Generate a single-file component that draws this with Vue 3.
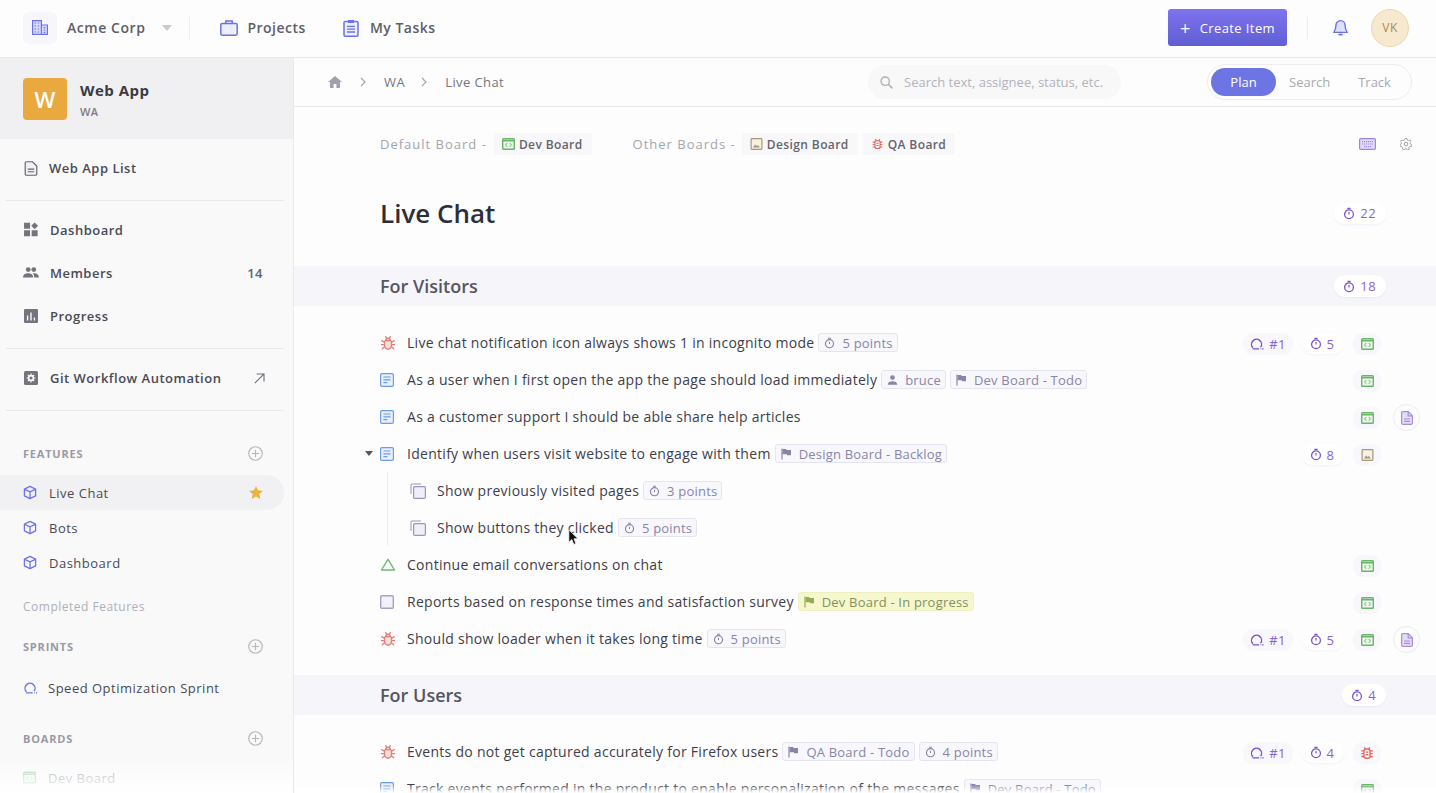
<template>
  <div class="app">
    <!-- icon sprite -->
    <svg class="sprite" width="0" height="0">
      <symbol id="i-bug" viewBox="0 0 16 16">
        <path d="M5.5 5.5h5a2.4 2.4 0 0 1 1 2v3a3.5 3.5 0 0 1-7 0v-3a2.4 2.4 0 0 1 1-2z" fill="#f5dedb" stroke="currentColor" stroke-width="1.3" />
        <path d="M5.8 5.3a2.2 2.2 0 0 1 4.4 0M5.6 1.6l1.2 1.6M10.4 1.6L9.2 3.2M4.4 7.2L1.8 5.6M11.6 7.2l2.6-1.6M4.4 9.6H1.4M11.6 9.6h3M4.7 11.8l-2.5 2M11.3 11.8l2.5 2" fill="none" stroke="currentColor" stroke-width="1.3" stroke-linecap="round" />
      </symbol>
      <symbol id="i-bug-solid" viewBox="0 0 16 16">
        <rect x="4.5" y="3.5" width="7" height="10.5" rx="2.6" fill="none" stroke="currentColor" stroke-width="1.6" />
        <path d="M6.5 7h3M6.5 10h3M1.5 5.5h3M11.5 5.5h3M1.5 8.7h3M11.5 8.7h3M1.5 12h3M11.5 12h3M6 3.5 5 1.5M10 3.5l1-2" fill="none" stroke="currentColor" stroke-width="1.5" />
      </symbol>
      <symbol id="i-story" viewBox="0 0 14 14">
        <rect x=".6" y=".6" width="12.8" height="12.8" rx="1.4" fill="#e9effb" stroke="currentColor" stroke-width="1.2" />
        <path d="M3.4 4h7.2M3.4 6.8h7.2M3.4 9.6h4" fill="none" stroke="currentColor" stroke-width="1.2" />
      </symbol>
      <symbol id="i-sub" viewBox="0 0 16 16">
        <path d="M1 11V1.8a.8.8 0 0 1 .8-.8H11" fill="none" stroke="currentColor" stroke-width="1" />
        <rect x="3.6" y="3.6" width="11.8" height="11.8" rx="1.2" fill="#f0eff7" stroke="currentColor" stroke-width="1.2" />
      </symbol>
      <symbol id="i-tri" viewBox="0 0 15 13">
        <path d="M7.5 1.3 14 12H1z" fill="none" stroke="currentColor" stroke-width="1.4" stroke-linejoin="round" />
      </symbol>
      <symbol id="i-square" viewBox="0 0 14 14">
        <rect x=".7" y=".7" width="12.6" height="12.6" rx="1.2" fill="#f2f1f8" stroke="currentColor" stroke-width="1.4" />
      </symbol>
      <symbol id="i-dev" viewBox="0 0 13 12">
        <rect x=".7" y=".7" width="11.6" height="10.6" rx=".8" fill="#eef7ec" stroke="currentColor" stroke-width="1.4" />
        <path d="M.7 2.7h11.6" stroke="currentColor" stroke-width="1.6" />
        <path d="M5.2 5 3.6 6.9l1.6 1.9M7.8 5l1.6 1.9-1.6 1.9" fill="none" stroke="currentColor" stroke-width="1" />
      </symbol>
      <symbol id="i-design" viewBox="0 0 12 12">
        <rect x=".6" y=".6" width="10.8" height="10.8" rx=".8" fill="#f7f1e4" stroke="currentColor" stroke-width="1.2" />
        <path d="M2.4 9.4 4.6 6.6l1.4 1.5 1.3-1.1 2.2 2.4z" fill="currentColor" />
      </symbol>
      <symbol id="i-timer" viewBox="0 0 12 12">
        <circle cx="6" cy="6.8" r="4.4" fill="none" stroke="currentColor" stroke-width="1.3" />
        <path d="M4.4.8h3.2M6 4.6v2.4" fill="none" stroke="currentColor" stroke-width="1.2" />
      </symbol>
      <symbol id="i-sprint" viewBox="0 0 14 14">
        <path d="M10.6 10.2A5 5 0 1 0 3 10.8" fill="none" stroke="currentColor" stroke-width="1.4" />
        <path d="M2.6 11.8h6.6M10.6 11.8h.8M12.4 11.8h1.2" fill="none" stroke="currentColor" stroke-width="1.3" />
      </symbol>
      <symbol id="i-flag" viewBox="0 0 11 12">
        <path d="M1 .5v11" stroke="currentColor" stroke-width="1.2" />
        <path d="M1.6 1h3.6l.4 1h4.4v5.2H6.2l-.4-1H1.6z" fill="currentColor" />
      </symbol>
      <symbol id="i-user" viewBox="0 0 12 12">
        <circle cx="6" cy="3.4" r="2.6" fill="currentColor" />
        <path d="M.8 11.2c0-2.6 2.4-3.8 5.2-3.8s5.2 1.2 5.2 3.8z" fill="currentColor" />
      </symbol>
      <symbol id="i-doc" viewBox="0 0 12 14">
        <path d="M1.6.7h5.8l4 4v7.4a1.2 1.2 0 0 1-1.2 1.2H1.8A1.2 1.2 0 0 1 .6 12.1V1.7a1 1 0 0 1 1-1z" fill="#e4dbf6" stroke="currentColor" stroke-width="1.2" />
        <path d="M7.2.8v4h4M3 8h6M3 10.4h6" fill="none" stroke="currentColor" stroke-width="1.2" />
      </symbol>
      <symbol id="i-cube" viewBox="0 0 14 14">
        <path d="M7 .8 12.6 3.6v6.8L7 13.2 1.4 10.4V3.6z" fill="none" stroke="currentColor" stroke-width="1.3" stroke-linejoin="round" />
        <path d="M1.6 3.8 7 6.4l5.4-2.6M7 6.4v6.6" fill="none" stroke="currentColor" stroke-width="1.3" />
      </symbol>
      <symbol id="i-plus" viewBox="0 0 14 14">
        <circle cx="7" cy="7" r="6.3" fill="none" stroke="currentColor" stroke-width="1.1" />
        <path d="M7 3.6v6.8M3.6 7h6.8" stroke="currentColor" stroke-width="1.1" />
      </symbol>
    </svg>

    <header class="topbar">
      <div class="org-icon">
        <svg width="16" height="15" viewBox="0 0 16 15">
          <path d="M.6.6h8.8v13.8H.6zM9.4 5h6v9.4h-6z" fill="#d9dcfb" stroke="#6a72ea" stroke-width="1.2" />
          <path d="M2.5 3h1.6M5.6 3h1.6M2.5 6h1.6M5.6 6h1.6M2.5 9h1.6M5.6 9h1.6M2.5 12h1.6M5.6 12h1.6M11.5 7.6h1.8M11.5 10h1.8M11.5 12.4h1.8" stroke="#6a72ea" stroke-width="1.2" />
        </svg>
      </div>
      <span class="org-name">Acme Corp</span>
      <span class="org-caret"></span>
      <span class="vsep"></span>
      <a class="top-link projects">
        <svg width="18" height="16" viewBox="0 0 18 16">
          <rect x=".8" y="3.6" width="16.4" height="11.6" rx="1.4" fill="#eeeffd" stroke="#6a72ea" stroke-width="1.5" />
          <path d="M5.8 3.6V1h6.4v2.6" fill="none" stroke="#6a72ea" stroke-width="1.5" />
        </svg>
        Projects
      </a>
      <a class="top-link tasks">
        <svg width="16" height="18" viewBox="0 0 16 18">
          <rect x="1" y="2.4" width="14" height="14.8" rx="1.2" fill="#eeeffd" stroke="#6a72ea" stroke-width="1.5" />
          <path d="M5 1h6v3H5z" fill="#6a72ea" />
          <path d="M4 7.4h8M4 10.2h8M4 13h8" stroke="#6a72ea" stroke-width="1.3" />
        </svg>
        My Tasks
      </a>
      <div class="top-right">
        <button class="create-btn"><span class="create-plus">+</span>Create Item</button>
        <span class="vsep"></span>
        <svg class="bell" width="15" height="18" viewBox="0 0 15 18">
          <path d="M7.5 1.6a4.6 4.6 0 0 1 4.6 4.6c0 4 .8 5.4 2.1 7.2H.8c1.3-1.8 2.1-3.2 2.1-7.2a4.6 4.6 0 0 1 4.6-4.6z" fill="#dfe1fc" stroke="#6a72ea" stroke-width="1.4" stroke-linejoin="round" />
          <path d="M5.5 15.6h4" stroke="#6a72ea" stroke-width="1.8" />
        </svg>
        <div class="avatar">VK</div>
      </div>
    </header>

    <div class="body">
      <aside class="sidebar">
        <div class="proj-head">
          <div class="proj-logo">W</div>
          <div class="proj-info">
            <div class="proj-name">Web App</div>
            <div class="proj-key">WA</div>
          </div>
        </div>

        <div class="side-group list-group">
          <div class="side-link list-link">
            <svg width="13" height="15" viewBox="0 0 12 14" class="side-ic">
              <path d="M1.6.7h5.8l4 4v7.4a1.2 1.2 0 0 1-1.2 1.2H1.8A1.2 1.2 0 0 1 .6 12.1V1.7a1 1 0 0 1 1-1z" fill="#f1f1f3" stroke="#64646f" stroke-width="1.1" />
              <path d="M3 7.6h6M3 10h6" stroke="#64646f" stroke-width="1.1" />
            </svg>
            Web App List
          </div>
        </div>

        <div class="side-group nav-group">
          <div class="side-link">
            <svg width="15" height="15" viewBox="0 0 14 14" class="side-ic">
              <path d="M.5.8h5.6v5.6H.5zM.5 7.6h5.6v5.6H.5zM7.6 7.6h5.6v5.6H7.6zM10.4.4l3.2 3.2-3.2 3.2-3.2-3.2z" fill="#74747f" />
            </svg>
            Dashboard
          </div>
          <div class="side-link">
            <svg width="16" height="11" viewBox="0 0 16 11" class="side-ic">
              <circle cx="5.2" cy="2.6" r="2.4" fill="#74747f" /><circle cx="10.8" cy="2.6" r="2.4" fill="#74747f" />
              <path d="M0 10.6c0-3 2.2-4.4 5.2-4.4s5 1.4 5 4.4zM11.2 10.6c0-1.8-.4-3-1.4-4.2 3.2-.4 6.2 1 6.2 4.2z" fill="#74747f" />
            </svg>
            Members
            <span class="side-count">14</span>
          </div>
          <div class="side-link">
            <svg width="15" height="14" viewBox="0 0 14 14" class="side-ic">
              <rect width="14" height="14" rx="1.2" fill="#74747f" />
              <path d="M3.6 6.5v5M7 3.4v8M10.4 8.4v3" stroke="#f9f9fa" stroke-width="1.4" />
            </svg>
            Progress
          </div>
        </div>

        <div class="side-group git-group">
          <div class="side-link">
            <svg width="14" height="14" viewBox="0 0 14 14" class="side-ic">
              <rect width="14" height="14" rx="1.6" fill="#74747f" />
              <circle cx="7" cy="7" r="2.4" fill="none" stroke="#f9f9fa" stroke-width="1.6" />
              <path d="M7 2.6v1.6M7 9.8v1.6M2.6 7h1.6M9.8 7h1.6M3.9 3.9 5 5M9 9l1.1 1.1M3.9 10.1 5 9M9 5l1.1-1.1" stroke="#f9f9fa" stroke-width="1.2" />
            </svg>
            Git Workflow Automation
            <svg class="side-arrow" width="11" height="11" viewBox="0 0 11 11">
              <path d="M.8 10.2 9.8 1.2M2.6 1h7.4v7.4" fill="none" stroke="#6d6d78" stroke-width="1.1" />
            </svg>
          </div>
        </div>

        <div class="side-title features-title">
          FEATURES
          <svg class="add-ic"><use href="#i-plus" /></svg>
        </div>
        <div class="feature active">
          <svg class="cube"><use href="#i-cube" /></svg>Live Chat
          <svg class="star" width="14" height="13" viewBox="0 0 14 13">
            <path d="M7 0l2 4.3 5 .6-3.7 3.2 1 4.9L7 10.6 2.7 13l1-4.9L0 4.9l5-.6z" fill="#ebb33f" />
          </svg>
        </div>
        <div class="feature"><svg class="cube"><use href="#i-cube" /></svg>Bots</div>
        <div class="feature"><svg class="cube"><use href="#i-cube" /></svg>Dashboard</div>
        <div class="completed">Completed Features</div>

        <div class="side-title">
          SPRINTS
          <svg class="add-ic"><use href="#i-plus" /></svg>
        </div>
        <div class="sprint-link"><svg class="sprint-ic"><use href="#i-sprint" /></svg>Speed Optimization Sprint</div>

        <div class="side-title boards-title">
          BOARDS
          <svg class="add-ic"><use href="#i-plus" /></svg>
        </div>
        <div class="feature faded"><svg class="cube green"><use href="#i-dev" /></svg>Dev Board</div>
        <div class="side-fade"></div>
      </aside>

      <main class="main">
        <div class="crumbs">
          <svg width="14" height="12" viewBox="0 0 14 12" class="home">
            <path d="M7 0 0 6h2v6h3.6V8h2.8v4H12V6h2z" fill="#a2a2ac" />
          </svg>
          <svg class="chev" width="6" height="10" viewBox="0 0 6 10"><path d="M1 .8 5 5 1 9.2" fill="none" stroke="#a2a2ac" stroke-width="1.2" /></svg>
          <span class="crumb crumb-key">WA</span>
          <svg class="chev second" width="6" height="10" viewBox="0 0 6 10"><path d="M1 .8 5 5 1 9.2" fill="none" stroke="#a2a2ac" stroke-width="1.2" /></svg>
          <span class="crumb">Live Chat</span>
          <div class="search">
            <svg width="13" height="13" viewBox="0 0 13 13">
              <circle cx="5.2" cy="5.2" r="4.2" fill="none" stroke="#aeaeb6" stroke-width="1.3" />
              <path d="M8.4 8.4l4 4" stroke="#aeaeb6" stroke-width="1.5" />
            </svg>
            Search text, assignee, status, etc.
          </div>
          <div class="tabs">
            <span class="tab on">Plan</span>
            <span class="tab search-tab">Search</span>
            <span class="tab">Track</span>
          </div>
        </div>

        <div class="boards-row">
          <span class="boards-label">Default Board -</span>
          <span class="board-chip"><svg class="bc-ic dev"><use href="#i-dev" /></svg>Dev Board</span>
          <span class="boards-label other">Other Boards -</span>
          <span class="board-chip"><svg class="bc-ic design"><use href="#i-design" /></svg>Design Board</span>
          <span class="board-chip"><svg class="bc-ic qa"><use href="#i-bug-solid" /></svg>QA Board</span>
          <svg class="kbd" width="17" height="12" viewBox="0 0 17 12">
            <rect x=".6" y=".6" width="15.8" height="10.8" rx="1.2" fill="#e3dcf7" stroke="#9c86df" stroke-width="1.2" />
            <path d="M3 3.6h11M3 6h11M5 8.6h7" stroke="#9c86df" stroke-width="1.2" stroke-dasharray="1.2 .8" />
          </svg>
          <svg class="gear" width="12" height="12" viewBox="0 0 12 12">
            <circle cx="6" cy="6" r="1.8" fill="none" stroke="#9b9ba4" />
            <path d="M5 .6h2l.3 1.5 1.3.6 1.3-.8 1.2 1.5-1 1.2.3 1.4 1.3.7-.4 1.9-1.5 0-.9 1.1.3 1.5-1.8.8-.9-1.2H5.1l-.9 1.2-1.8-.8.3-1.5-.9-1.1-1.5 0-.4-1.9 1.3-.7.3-1.4-1-1.2 1.2-1.5 1.3.8 1.3-.6z" fill="none" stroke="#9b9ba4" stroke-width=".9" stroke-linejoin="round" />
          </svg>
        </div>

        <div class="title-row">
          <h1>Live Chat</h1>
          <span class="est-pill title-est"><svg class="timer"><use href="#i-timer" /></svg>22</span>
        </div>

        <section v-for="sec in sections" :key="sec.name">
          <div class="sec-head">
            <h2>{{ sec.name }}</h2>
            <span class="est-pill sec-est"><svg class="timer"><use href="#i-timer" /></svg>{{ sec.points }}</span>
          </div>
          <div class="rows">
            <div v-for="row in sec.rows" :key="row.text" class="row" :class="{ child: row.child }">
              <span v-if="row.open" class="row-caret"></span>
              <span v-if="row.child" class="tree-line"></span>
              <svg class="type-ic" :class="row.type"><use :href="'#i-' + row.type" /></svg>
              <span class="row-text">{{ row.text }}</span>
              <span v-for="tag in row.tags" :key="tag.label" class="tag" :class="{ lime: tag.lime }">
                <svg class="tag-ic"><use :href="'#i-' + tag.icon" /></svg>{{ tag.label }}
              </span>
              <div class="row-meta">
                <span class="m-sprint"><span v-if="row.sprint" class="sprint-chip"><svg class="m-sprint-ic"><use href="#i-sprint" /></svg>#1</span></span>
                <span class="m-est"><span v-if="row.points" class="est-pill"><svg class="timer"><use href="#i-timer" /></svg>{{ row.points }}</span></span>
                <span class="m-board" :class="{ filled: row.board }"><svg v-if="row.board" class="m-board-ic" :class="row.board"><use :href="'#i-' + boardIcons[row.board]" /></svg></span>
                <span class="m-doc"><span v-if="row.doc" class="doc-btn"><svg class="doc-ic"><use href="#i-doc" /></svg></span></span>
              </div>
            </div>
          </div>
        </section>
        <div class="main-fade"></div>
      </main>
    </div>

    <!-- mouse pointer caught in the recording -->
    <svg class="pointer" width="11" height="17" viewBox="0 0 11 17">
      <path d="M.8.8v12.6l3-2.8 2 4.8 2.2-.9-2-4.7h4.2z" fill="#111" stroke="#fff" stroke-width=".8" />
    </svg>
  </div>
</template>

<script setup>
const boardIcons = { dev: 'dev', design: 'design', qa: 'bug-solid' }

const sections = [
  {
    name: 'For Visitors',
    points: 18,
    rows: [
      { type: 'bug', text: 'Live chat notification icon always shows 1 in incognito mode', tags: [{ icon: 'timer', label: '5 points' }], sprint: true, points: 5, board: 'dev' },
      { type: 'story', text: 'As a user when I first open the app the page should load immediately', tags: [{ icon: 'user', label: 'bruce' }, { icon: 'flag', label: 'Dev Board - Todo' }], board: 'dev' },
      { type: 'story', text: 'As a customer support I should be able share help articles', board: 'dev', doc: true },
      { type: 'story', open: true, text: 'Identify when users visit website to engage with them', tags: [{ icon: 'flag', label: 'Design Board - Backlog' }], points: 8, board: 'design' },
      { type: 'sub', child: true, text: 'Show previously visited pages', tags: [{ icon: 'timer', label: '3 points' }] },
      { type: 'sub', child: true, text: 'Show buttons they clicked', tags: [{ icon: 'timer', label: '5 points' }] },
      { type: 'tri', text: 'Continue email conversations on chat', board: 'dev' },
      { type: 'square', text: 'Reports based on response times and satisfaction survey', tags: [{ icon: 'flag', label: 'Dev Board - In progress', lime: true }], board: 'dev' },
      { type: 'bug', text: 'Should show loader when it takes long time', tags: [{ icon: 'timer', label: '5 points' }], sprint: true, points: 5, board: 'dev', doc: true }
    ]
  },
  {
    name: 'For Users',
    points: 4,
    rows: [
      { type: 'bug', text: 'Events do not get captured accurately for Firefox users', tags: [{ icon: 'flag', label: 'QA Board - Todo' }, { icon: 'timer', label: '4 points' }], sprint: true, points: 4, board: 'qa' },
      { type: 'story', text: 'Track events performed in the product to enable personalization of the messages', tags: [{ icon: 'flag', label: 'Dev Board - Todo' }], board: 'dev' }
    ]
  }
]
</script>

<style>
html, body {
  margin: 0;
  background: #fdfdfe;
}
</style>

<style scoped>
.app {
  position: relative;
  height: 793px;
  overflow: hidden;
  background: #fdfdfe;
  color: #3a3a45;
  font-family: "Open Sans", "Liberation Sans", sans-serif;
  font-size: 14px;
}

.sprite {
  position: absolute;
}

/* top bar */
.topbar {
  display: flex;
  align-items: center;
  height: 55px;
  padding: 0 27px 2px 23px;
  border-bottom: 1px solid #e9e9ec;
  background: #fdfdfe;
}

.org-icon {
  display: flex;
  align-items: center;
  justify-content: center;
  width: 34px;
  height: 32px;
  border-radius: 6px;
  background: #f6f6fb;
}

.org-name {
  margin-left: 10px;
  font-size: 14px;
  font-weight: 600;
  letter-spacing: 0.55px;
  color: #5d5d69;
}

.org-caret {
  width: 0;
  height: 0;
  margin-left: 17px;
  border: 5px solid transparent;
  border-top: 6px solid #c9c9cf;
  border-bottom: 0;
}

.vsep {
  width: 1px;
  height: 22px;
  margin-left: 17px;
  background: #ededf0;
}

.top-link {
  display: flex;
  align-items: center;
  gap: 9px;
  margin-left: 30px;
  font-weight: 600;
  letter-spacing: 0.5px;
  color: #5d5d69;
}

.top-link.tasks {
  gap: 11px;
  margin-left: 37px;
}

.top-right {
  display: flex;
  align-items: center;
  margin-left: auto;
}

.create-btn {
  display: flex;
  align-items: center;
  width: 119px;
  height: 37px;
  padding: 0 0 0 12px;
  border: 0;
  border-radius: 3px;
  background: linear-gradient(#7f72ee, #5f5fd2);
  color: #fff;
  font-family: inherit;
  font-size: 13px;
  letter-spacing: 0.4px;
}

.create-plus {
  margin-right: 9px;
  font-size: 18px;
  line-height: 18px;
}

.top-right .vsep {
  margin-left: 20px;
}

.bell {
  margin-left: 25px;
}

.avatar {
  display: flex;
  align-items: center;
  justify-content: center;
  box-sizing: border-box;
  width: 38px;
  height: 38px;
  margin-left: 23px;
  border: 1px solid #ecd9a8;
  border-radius: 50%;
  background: #f6e9cf;
  color: #a98b4f;
  font-size: 12px;
  letter-spacing: 0.5px;
}

.body {
  display: flex;
  height: 735px;
}

/* sidebar */
.sidebar {
  position: relative;
  flex: 0 0 293px;
  height: 735px;
  overflow: hidden;
  border-right: 1px solid #e9e9ec;
  background: #f9f9fa;
}

.proj-head {
  display: flex;
  align-items: center;
  gap: 13px;
  height: 81px;
  padding-left: 23px;
  background: #f0f0f2;
}

.proj-logo {
  display: flex;
  align-items: center;
  justify-content: center;
  width: 44px;
  height: 42px;
  border-radius: 4px;
  background: #eaa93f;
  color: #fff;
  font-size: 22px;
  font-weight: 600;
}

.proj-info {
  margin-top: 2px;
}

.proj-name {
  font-size: 15px;
  font-weight: 700;
  letter-spacing: 0.5px;
  color: #3a3a45;
}

.proj-key {
  margin-top: 4px;
  font-size: 11px;
  font-weight: 600;
  letter-spacing: 0.3px;
  color: #7b7b86;
}

.side-group {
  margin-right: 9px;
  margin-left: 6px;
  border-bottom: 1px solid #e9e9ec;
}

.list-group {
  height: 61px;
}

.nav-group {
  height: 140px;
}

.git-group {
  height: 61px;
}

.side-link {
  position: relative;
  display: flex;
  align-items: center;
  height: 43px;
  padding-left: 17px;
  font-size: 13px;
  font-weight: 600;
  letter-spacing: 0.5px;
  color: #4a4a55;
}

.list-link {
  height: 58px;
}

.nav-group .side-link:first-child {
  margin-top: 7px;
}

.git-group .side-link {
  height: 58px;
}

.side-ic {
  flex: 0 0 auto;
  width: 16px;
  margin-right: 11px;
}

.list-link .side-ic {
  margin-right: 10px;
}

.side-count {
  position: absolute;
  right: 21px;
  color: #64646f;
}

.side-arrow {
  position: absolute;
  right: 19px;
}

.side-title {
  display: flex;
  align-items: center;
  justify-content: space-between;
  height: 20px;
  margin: 21px 30px 0 23px;
  font-size: 11px;
  font-weight: 700;
  letter-spacing: 0.8px;
  color: #9a9aa3;
}

.features-title {
  margin-top: 32px;
}

.boards-title {
  margin-top: 30px;
}

.add-ic {
  width: 15px;
  height: 15px;
  color: #b6b6bd;
}

.feature {
  position: relative;
  display: flex;
  align-items: center;
  height: 35px;
  padding-left: 23px;
  font-size: 13px;
  letter-spacing: 0.5px;
  color: #4a4a55;
}

.feature.active {
  margin-top: 12px;
  margin-right: 9px;
  border-radius: 0 18px 18px 0;
  background: #f1f1f3;
}

.cube {
  width: 14px;
  height: 15px;
  margin-right: 12px;
  color: #6f73ee;
}

.cube.green {
  color: #6ab56a;
  width: 13px;
}

.star {
  position: absolute;
  right: 21px;
}

.completed {
  margin-top: 18px;
  padding-left: 23px;
  font-size: 12px;
  line-height: 17px;
  letter-spacing: 0.5px;
  color: #b0b0b8;
}

.sprint-link {
  display: flex;
  align-items: center;
  margin-top: 22px;
  padding-left: 23px;
  font-size: 13px;
  line-height: 20px;
  letter-spacing: 0.5px;
  color: #4a4a55;
}

.sprint-ic {
  width: 15px;
  height: 14px;
  margin-right: 10px;
  color: #6f73ee;
}

.faded {
  margin-top: 12px;
  opacity: 0.5;
}

.side-fade {
  position: absolute;
  right: 0;
  bottom: 0;
  left: 0;
  height: 34px;
  background: linear-gradient(rgba(255, 255, 255, 0), #fff);
}

/* main */
.main {
  position: relative;
  flex: 1;
  min-width: 0;
}

.crumbs {
  display: flex;
  align-items: center;
  height: 48px;
  padding: 0 24px 0 34px;
  border-bottom: 1px solid #e9e9ec;
  font-size: 13px;
  letter-spacing: 0.4px;
  color: #75757f;
}

.chev {
  margin: 0 18px;
}

.crumb-key {
  letter-spacing: 0.5px;
}

.chev.second {
  margin: 0 18px 0 16px;
}

.search {
  display: flex;
  align-items: center;
  gap: 11px;
  width: 253px;
  height: 34px;
  box-sizing: border-box;
  margin-left: auto;
  padding-left: 12px;
  border-radius: 17px;
  background: #f8f8f9;
  color: #b3b3bb;
  font-size: 13px;
  letter-spacing: 0;
}

.tabs {
  display: flex;
  align-items: center;
  box-sizing: border-box;
  width: 205px;
  height: 36px;
  margin-left: 86px;
  padding-left: 3px;
  border: 1px solid #ededf0;
  border-radius: 18px;
  color: #a9a9b1;
}

.tab {
  font-size: 13px;
  letter-spacing: 0;
}

.tab.on {
  display: flex;
  align-items: center;
  justify-content: center;
  width: 65px;
  height: 28px;
  border-radius: 14px;
  background: #6c75e3;
  color: #fff;
}

.search-tab {
  margin-right: 28px;
  margin-left: 13px;
}

.boards-row {
  display: flex;
  align-items: center;
  height: 28px;
  margin-top: 23px;
  padding: 0 24px 0 86px;
}

.boards-label {
  margin-right: 7px;
  font-size: 13px;
  letter-spacing: 1px;
  color: #a4a4ad;
}

.boards-label.other {
  margin-right: 6px;
  margin-left: 36px;
}

.board-chip {
  display: flex;
  align-items: center;
  height: 22px;
  margin-right: 5px;
  padding: 0 9px 0 8px;
  border-radius: 3px;
  background: #f8f8fa;
  font-size: 12px;
  font-weight: 600;
  letter-spacing: 0.4px;
  color: #64646f;
}

.bc-ic {
  width: 13px;
  height: 12px;
  margin-right: 4px;
}

.bc-ic.dev {
  color: #6ab56a;
}

.bc-ic.design {
  color: #a8977a;
}

.bc-ic.qa {
  color: #e06a5f;
}

.kbd {
  margin-left: auto;
}

.gear {
  margin-left: 24px;
}

.title-row {
  display: flex;
  align-items: center;
  justify-content: space-between;
  height: 42px;
  margin-top: 34px;
  padding: 0 50px 0 86px;
}

h1 {
  margin: 0;
  font-size: 26px;
  font-weight: 600;
  color: #2e2e38;
}

.sec-head {
  display: flex;
  align-items: center;
  justify-content: space-between;
  height: 40px;
  padding: 0 50px 0 86px;
  background: #f5f5fa;
}

section:first-of-type .sec-head {
  margin-top: 32px;
}

h2 {
  margin: 0;
  font-size: 18px;
  font-weight: 600;
  color: #565662;
}

.est-pill {
  display: inline-flex;
  align-items: center;
  justify-content: center;
  gap: 5px;
  box-sizing: border-box;
  min-width: 42px;
  height: 21px;
  padding: 0 7px 0 5px;
  border-radius: 11px;
  background: #fff;
  box-shadow: 0 1px 2px rgba(110, 100, 180, 0.08);
  font-size: 13px;
  letter-spacing: 0.4px;
  color: #8a63d2;
}

.sec-est {
  height: 22px;
  padding: 0 10px 0 9px;
}

.title-est {
  padding: 0 10px 0 9px;
}

.timer {
  width: 12px;
  height: 13px;
  color: #7a52cf;
}

.rows {
  padding: 18px 0 18px;
}

.row {
  position: relative;
  display: flex;
  align-items: center;
  height: 37px;
  padding: 0 16px 0 86px;
  font-size: 14px;
  letter-spacing: 0.28px;
  color: #3e3e49;
}

.row.child {
  padding-left: 116px;
}

.row-caret {
  position: absolute;
  left: 71px;
  width: 0;
  height: 0;
  border: 4px solid transparent;
  border-top: 5px solid #55555f;
  border-bottom: 0;
}

.tree-line {
  position: absolute;
  top: 0;
  bottom: 0;
  left: 93px;
  width: 1px;
  background: #ececf0;
}

.type-ic {
  flex: 0 0 auto;
  width: 16px;
  height: 16px;
  margin-right: 11px;
}

.type-ic.bug {
  color: #e07f76;
}

.type-ic.story {
  width: 14px;
  height: 14px;
  margin-right: 13px;
  color: #6f9ce6;
}

.type-ic.sub {
  margin-right: 11px;
  color: #9a93c4;
}

.type-ic.tri {
  height: 13px;
  color: #6fb976;
}

.type-ic.square {
  width: 14px;
  height: 14px;
  margin-right: 13px;
  color: #a5a2cc;
}

.tag {
  display: inline-flex;
  align-items: center;
  height: 19px;
  box-sizing: border-box;
  margin-left: 4px;
  padding: 0 4px 0 5px;
  border: 1px solid #e5e4f1;
  border-radius: 3px;
  background: #f8f8fc;
  font-size: 13px;
  letter-spacing: 0.2px;
  color: #8985a8;
}

.tag.lime {
  border-color: #eef0bd;
  background: #f5f7cf;
  color: #86915a;
}

.tag-ic {
  width: 11px;
  height: 12px;
  margin-right: 7px;
  color: #8985a8;
}

.tag.lime .tag-ic {
  color: #9aa956;
}

.row-meta {
  display: flex;
  align-items: center;
  margin-top: 2px;
  margin-left: auto;
}

.m-sprint {
  display: flex;
  width: 50px;
}

.sprint-chip {
  display: flex;
  align-items: center;
  justify-content: center;
  gap: 5px;
  width: 50px;
  height: 22px;
  border-radius: 9px;
  background: #f8f7fc;
  font-size: 13px;
  letter-spacing: 0.4px;
  color: #8a63d2;
}

.m-sprint-ic {
  width: 14px;
  height: 14px;
  color: #7a52cf;
}

.m-est {
  display: flex;
  justify-content: center;
  width: 42px;
  margin-left: 9px;
}

.m-board {
  display: flex;
  align-items: center;
  justify-content: center;
  width: 28px;
  height: 22px;
  margin-left: 9px;
  border-radius: 9px;
}

.m-board.filled {
  background: #f8f7fc;
}

.m-board-ic {
  width: 13px;
  height: 12px;
}

.m-board-ic.dev {
  color: #6ab56a;
}

.m-board-ic.design {
  color: #a8977a;
}

.m-board-ic.qa {
  width: 14px;
  height: 14px;
  color: #e06a5f;
}

.m-doc {
  display: flex;
  justify-content: center;
  width: 27px;
  margin-left: 12px;
}

.doc-btn {
  display: flex;
  align-items: center;
  justify-content: center;
  box-sizing: border-box;
  width: 27px;
  height: 27px;
  border: 1px solid #ececf0;
  border-radius: 50%;
  background: #fdfdfe;
}

.doc-ic {
  width: 12px;
  height: 14px;
  color: #a78ee0;
}

.main-fade {
  position: absolute;
  right: 0;
  bottom: 0;
  left: 0;
  height: 8px;
  background: linear-gradient(rgba(255, 255, 255, 0), #fff);
}

.pointer {
  position: absolute;
  top: 529px;
  left: 568px;
}
</style>
